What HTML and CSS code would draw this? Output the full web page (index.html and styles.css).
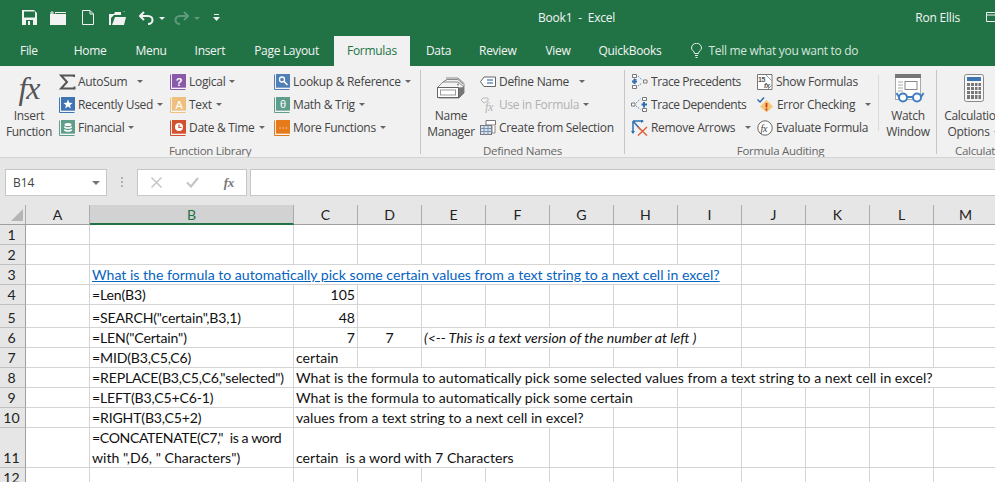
FILE: index.html
```html
<!DOCTYPE html>
<html lang="en">
<head>
<meta charset="utf-8">
<title>Book1 - Excel</title>
<link rel="stylesheet" href="styles.css">
</head>
<body>
<svg class="defs" width="0" height="0" aria-hidden="true">
  <symbol id="book" viewBox="0 0 16 16">
    <path d="M0.5 0.5V15.5H15.5" fill="none" stroke="currentColor"/>
    <rect x="2" y="0" width="14" height="14" fill="currentColor"/>
    <path d="M2 14H16" stroke="#fff" stroke-width="0.6"/>
  </symbol>
</svg>
<header class="titlebar">
  <div class="qat">
    <svg class="qi save" width="15" height="15" viewBox="0 0 15 15"><path d="M0 0H12L15 3V15H0Z" fill="#f2f2f2"/><rect x="2" y="1.500" width="11" height="6" fill="#217346"/><rect x="4" y="10" width="7" height="5" fill="#217346"/><rect x="6" y="11" width="2" height="4" fill="#f2f2f2"/></svg>
    <svg class="qi folder" width="16" height="14" viewBox="0 0 16 14"><path d="M0 3H5V1H16V14H0Z" fill="#f2f2f2"/><path d="M2 0V4M0 2H4" stroke="#f2f2f2"/><path d="M5.5 2.5H16" stroke="#217346"/></svg>
    <svg class="qi file" width="12" height="15" viewBox="0 0 12 15"><path d="M.5.5H8L11.5 4V14.5H.5Z" fill="none" stroke="#f2f2f2"/><path d="M8 .5V4H11.5" fill="none" stroke="#f2f2f2"/></svg>
    <svg class="qi open" width="17" height="14" viewBox="0 0 17 14"><path d="M0 14V3H5L6 1H12V4H5L2 7V14Z" fill="#f2f2f2"/><path d="M3 14L6 6H16V1L13 0L16 .5V6L17 6L15 14Z" fill="#f2f2f2"/></svg>
    <svg class="qi undo" width="15" height="14" viewBox="0 0 15 14"><path d="M5 1L1 5L5 9" fill="none" stroke="#f2f2f2" stroke-width="2"/><path d="M1.5 5H9C12 5 13.5 7 13.5 9C13.5 11 12 13 9 13" fill="none" stroke="#f2f2f2" stroke-width="2"/></svg>
    <span class="qcaret"></span>
    <svg class="qi redo" width="15" height="14" viewBox="0 0 15 14"><path d="M10 1L14 5L10 9" fill="none" stroke="#5f9a7c" stroke-width="2"/><path d="M13.5 5H6C3 5 1.5 7 1.5 9C1.5 11 3 13 6 13" fill="none" stroke="#5f9a7c" stroke-width="2"/></svg>
    <span class="qcaret dim"></span>
    <svg class="qi custom" width="7" height="8" viewBox="0 0 7 8"><path d="M1 .5H6" stroke="#f2f2f2"/><path d="M0 3H7L3.5 7Z" fill="#f2f2f2"/></svg>
  </div>
  <div class="doc">Book1  -  Excel</div>
  <div class="user">Ron Ellis</div>
  <svg class="display" width="12" height="10" viewBox="0 0 12 10"><path d="M.5.5H11.5V9.5H.5ZM.5 3H11.5" fill="none" stroke="#f2f2f2"/></svg>
</header>
<nav class="tabs">
  <span class="tab t-file">File</span>
  <span class="tab t-home">Home</span>
  <span class="tab t-menu">Menu</span>
  <span class="tab t-insert">Insert</span>
  <span class="tab t-layout">Page Layout</span>
  <span class="tab active">Formulas</span>
  <span class="tab t-data">Data</span>
  <span class="tab t-review">Review</span>
  <span class="tab t-view">View</span>
  <span class="tab t-qb">QuickBooks</span>
  <svg class="bulb" width="11" height="15" viewBox="0 0 11 15"><path d="M3.5 10.5C3.5 8 .5 7.500 .5 5A5 4.700 0 0 1 10.500 5C10.500 7.500 7.500 8 7.500 10.500Z" fill="none" stroke="#e6f0ea"/><path d="M4 12.500H7M4.500 14.500H6.500" stroke="#e6f0ea"/></svg>
  <span class="tell">Tell me what you want to do</span>
</nav>
<section class="ribbon">
  <div class="group g-lib">
    <div class="gbody">
      <div class="big b-insert">
        <span class="fx-big">fx</span>
        <span class="biglabel">Insert<br>Function</span>
      </div>
      <div class="col c-a">
        <div class="cmd">
          <svg class="ic" width="17" height="16" viewBox="0 0 17 16"><path d="M15 3V1.500H2L8 8L2 14.500H15.500V12.500" fill="none" stroke="#555" stroke-width="2"/></svg>
          <span>AutoSum</span><i class="caret wide"></i>
        </div>
        <div class="cmd"><svg class="ic blue" width="16" height="16"><use href="#book"/><path d="M9 2.500L10.300 5.800L13.500 6L11 8.200L11.900 11.500L9 9.600L6.100 11.500L7 8.200L4.500 6L7.700 5.800Z" fill="#fff"/></svg><span>Recently Used</span><i class="caret"></i></div>
        <div class="cmd"><svg class="ic green" width="16" height="16"><use href="#book"/><ellipse cx="9" cy="4.500" rx="3.500" ry="1.500" fill="#fff"/><path d="M5.500 6.500C6 8.500 12 8.500 12.500 6.500M5.500 9.500C6 11.500 12 11.500 12.500 9.500" fill="none" stroke="#fff" stroke-width="1.400"/></svg><span>Financial</span><i class="caret"></i></div>
      </div>
      <div class="col c-b">
        <div class="cmd"><svg class="ic purple" width="16" height="16"><use href="#book"/><text x="9" y="11.500" class="gl">?</text></svg><span>Logical</span><i class="caret"></i></div>
        <div class="cmd"><svg class="ic sand" width="16" height="16"><use href="#book"/><text x="9" y="11.500" class="gl thin">A</text></svg><span>Text</span><i class="caret"></i></div>
        <div class="cmd"><svg class="ic red" width="16" height="16"><use href="#book"/><circle cx="9" cy="7" r="4" fill="#fff"/><path d="M9 4.500V7.500H11.500" fill="none" stroke="#d2512f" stroke-width="1.200"/></svg><span>Date &amp; Time</span><i class="caret"></i></div>
      </div>
      <div class="col">
        <div class="cmd"><svg class="ic steel" width="16" height="16"><use href="#book"/><circle cx="8" cy="5.500" r="2.500" fill="none" stroke="#fff" stroke-width="1.300"/><path d="M10 7.500L13.500 11" stroke="#fff" stroke-width="1.600"/></svg><span>Lookup &amp; Reference</span><i class="caret"></i></div>
        <div class="cmd"><svg class="ic green" width="16" height="16"><use href="#book"/><text x="9" y="11" class="gl thin">θ</text></svg><span>Math &amp; Trig</span><i class="caret"></i></div>
        <div class="cmd"><svg class="ic orange" width="16" height="16"><use href="#book"/><path d="M5.500 8H6.500M8.500 8H9.500M11.500 8H12.500" stroke="#fff"/></svg><span>More Functions</span><i class="caret"></i></div>
      </div>
    </div>
    <div class="glabel">Function Library</div>
  </div>
  <div class="sep"></div>
  <div class="group g-names">
    <div class="gbody">
      <div class="big b-name">
        <svg class="bigic" width="28" height="22" viewBox="0 0 28 22"><path d="M1 10L6 5H21L27 10V16L22 21H2Z" fill="#f4f4f4" stroke="#888"/><path d="M6 5L10 2.500H21L26 7M9 1H21L27 6.500V10" fill="none" stroke="#888"/><path d="M22 10.500L27 10V16L22 21Z" fill="#777"/><rect x=".5" y="10.500" width="21" height="10" fill="#fff" stroke="#666"/><rect x="3.500" y="13" width="15" height="5" fill="#fff" stroke="#999"/><circle cx="21" cy="7.500" r="1" fill="#888"/></svg>
        <span class="biglabel">Name<br>Manager</span>
      </div>
      <div class="col">
        <div class="cmd"><svg class="ic" width="17" height="14" viewBox="0 0 17 14"><path d="M4 2H15.500V11.500H4L.5 6.700Z" fill="#fff" stroke="#666"/><path d="M7 5H13" stroke="#3f74b3" stroke-width="1.200"/><path d="M7 8H13" stroke="#3f74b3" stroke-width="1.200"/></svg><span>Define Name</span><i class="caret wide"></i></div>
        <div class="cmd off"><svg class="ic" width="17" height="16" viewBox="0 0 17 16"><path d="M3 1H8V4L4 6L1 3Z" fill="none" stroke="#bbb"/><text x="5" y="14" class="fxs">fx</text></svg><span>Use in Formula</span><i class="caret"></i></div>
        <div class="cmd"><svg class="ic" width="16" height="15" viewBox="0 0 16 15"><path d="M6 .5H15.500V5H6Z" fill="#fff" stroke="#777"/><rect x=".5" y="5.500" width="11" height="9" fill="#d9e3ef" stroke="#777"/><path d="M.5 8.500H11.500M4 5.500V14.500M8 5.500V14.500M.5 11.500H11.500" stroke="#7b93b2"/><path d="M12 5V13H15V6" fill="#fff" stroke="#888"/></svg><span>Create from Selection</span></div>
      </div>
    </div>
    <div class="glabel">Defined Names</div>
  </div>
  <div class="sep"></div>
  <div class="group g-audit">
    <div class="gbody">
      <div class="col c-t">
        <div class="cmd"><svg class="ic" width="17" height="16" viewBox="0 0 17 16"><path d="M1.500.500H5.500V3.500H1.500ZM1.500 11.500H5.500V14.500H1.500ZM12.500 6H16V9H12.500Z" fill="#fff" stroke="#777"/><path d="M3.500 4.500V5.500M3.500 5.500H5.500" fill="none" stroke="#3f74b3"/><path d="M3.500 5V10M1 7.500H6" stroke="#2f6db0" stroke-width="2"/><path d="M7 2L11 6M7 12L11 9" stroke="#5b93c9" stroke-dasharray="1.500 1"/></svg><span class="tight">Trace Precedents</span></div>
        <div class="cmd"><svg class="ic" width="17" height="16" viewBox="0 0 17 16"><path d="M11.500.500H15.500V3.500H11.500ZM11.500 11.500H15.500V14.500H11.500ZM.500 6H4V9H.500Z" fill="#fff" stroke="#777"/><path d="M13 5V10.500M10.500 7.500H16" stroke="#2f6db0" stroke-width="2"/><path d="M5 6L9.500 2M5 9L9.500 12.500" stroke="#5b93c9" stroke-dasharray="1.500 1"/></svg><span class="tight">Trace Dependents</span></div>
        <div class="cmd"><svg class="ic" width="17" height="16" viewBox="0 0 17 16"><path d="M2 1V13M2 1L12 1M2 1L9 9" stroke="#2f6db0" stroke-width="1.500" fill="none"/><path d="M0 11L2 14L4 11M10 0L13 1L10 3" fill="#2f6db0"/><path d="M7 7L16 15.500M16 7L7 15.500" stroke="#e2613a" stroke-width="1.500"/></svg><span>Remove Arrows</span><i class="caret wide"></i></div>
      </div>
      <div class="col c-s">
        <div class="cmd"><svg class="ic" width="16" height="16" viewBox="0 0 16 16"><path d="M.500.500H15V15.500H.500Z" fill="#fff" stroke="#777"/><path d="M9 1L15 7M11 15L15 11" stroke="#999"/><text x="1" y="7.500" class="mini">15</text><text x="7" y="14" class="mini it">fx</text></svg><span>Show Formulas</span></div>
        <div class="cmd"><svg class="ic" width="17" height="16" viewBox="0 0 17 16"><path d="M9.500 3L16 9.500L9.500 15.500L3 9.500Z" fill="#f3c678"/><path d="M9.500 6V10.500" stroke="#cf3a1e" stroke-width="1.800"/><path d="M9.500 11.500V13.500" stroke="#cf3a1e" stroke-width="1.800"/><path d="M0.500 2.500L3 5L7 0.500" fill="none" stroke="#2f6db0" stroke-width="1.500"/></svg><span>Error Checking</span><i class="caret wide"></i></div>
        <div class="cmd"><svg class="ic" width="16" height="16" viewBox="0 0 16 16"><circle cx="8" cy="8" r="7.200" fill="#fff" stroke="#666"/><text x="3.500" y="11.500" class="fxe">fx</text></svg><span>Evaluate Formula</span></div>
      </div>
      <div class="sep short"></div>
      <div class="big b-watch">
        <svg class="bigic" width="30" height="29" viewBox="0 0 30 29"><rect x=".5" y=".5" width="25" height="25" fill="#fff" stroke="#aaa"/><rect x="0" y="0" width="26" height="4" fill="#777"/><rect x="10" y="7.500" width="12" height="8" fill="#fff" stroke="#888"/><path d="M3 8H8M3 11H8M3 14H8M3 17H8" stroke="#aaa"/><circle cx="8" cy="23.500" r="4" fill="#fff" stroke="#3f7fc1" stroke-width="2"/><circle cx="22" cy="23.500" r="4" fill="#fff" stroke="#3f7fc1" stroke-width="2"/><path d="M12 23H18M4 23L1.500 19M26 23L28.500 19" stroke="#3f7fc1" stroke-width="2" fill="none"/></svg>
        <span class="biglabel">Watch<br>Window</span>
      </div>
    </div>
    <div class="glabel">Formula Auditing</div>
  </div>
  <div class="sep"></div>
  <div class="group g-calc">
    <div class="gbody">
      <div class="big b-calc">
        <svg class="bigic" width="20" height="28" viewBox="0 0 20 28"><rect x=".5" y=".5" width="19" height="27" rx="2" fill="#f6f6f6" stroke="#888"/><rect x="3" y="3" width="14" height="4" fill="#3f74b3"/><path d="M3 9H17V25H3Z" fill="#777"/><path d="M3 12.500H17M3 16.500H17M3 20.500H17M6.500 9V25M10.500 9V25M14 9V25" stroke="#f6f6f6"/></svg>
        <span class="biglabel">Calculation<br>Options<i class="caret"></i></span>
      </div>
    </div>
    <div class="glabel">Calculation</div>
  </div>
</section>
<section class="fbar">
  <div class="namebox"><span>B14</span><i class="caret dark"></i></div>
  <div class="grip"></div>
  <div class="fbtns">
    <svg width="11" height="11" viewBox="0 0 11 11"><path d="M.5.500L10.500 10.500M10.500.500L.5 10.500" stroke="#c6c6c6" stroke-width="1.500"/></svg>
    <svg width="13" height="11" viewBox="0 0 13 11"><path d="M1 5.500L5 9.500L12 1" fill="none" stroke="#c6c6c6" stroke-width="2.200"/></svg>
    <span class="fxbtn">fx</span>
  </div>
  <div class="finput"></div>
</section>
<main class="sheet">
  <div class="ch corner"><svg width="13" height="13" viewBox="0 0 13 13"><path d="M12 0V12H0Z" fill="#b5b5b5"/></svg></div>
  <div class="ch">A</div><div class="ch sel">B</div><div class="ch">C</div><div class="ch">D</div><div class="ch">E</div><div class="ch">F</div><div class="ch">G</div><div class="ch">H</div><div class="ch">I</div><div class="ch">J</div><div class="ch">K</div><div class="ch">L</div><div class="ch">M</div>

  <div class="rh">1</div><div class="c"></div><div class="c"></div><div class="c"></div><div class="c"></div><div class="c"></div><div class="c"></div><div class="c"></div><div class="c"></div><div class="c"></div><div class="c"></div><div class="c"></div><div class="c"></div><div class="c"></div>

  <div class="rh">2</div><div class="c"></div><div class="c"></div><div class="c"></div><div class="c"></div><div class="c"></div><div class="c"></div><div class="c"></div><div class="c"></div><div class="c"></div><div class="c"></div><div class="c"></div><div class="c"></div><div class="c"></div>

  <div class="rh">3</div><div class="c"></div><div class="c s8"><a class="link">What is the formula to automatically pick some certain values from a text string to a next cell in excel?</a></div><div class="c"></div><div class="c"></div><div class="c"></div><div class="c"></div>

  <div class="rh">4</div><div class="c"></div><div class="c f">=Len(B3)</div><div class="c num">105</div><div class="c"></div><div class="c"></div><div class="c"></div><div class="c"></div><div class="c"></div><div class="c"></div><div class="c"></div><div class="c"></div><div class="c"></div><div class="c"></div>

  <div class="rh">5</div><div class="c"></div><div class="c f">=SEARCH("certain",B3,1)</div><div class="c num">48</div><div class="c"></div><div class="c"></div><div class="c"></div><div class="c"></div><div class="c"></div><div class="c"></div><div class="c"></div><div class="c"></div><div class="c"></div><div class="c"></div>

  <div class="rh">6</div><div class="c"></div><div class="c f">=LEN("Certain")</div><div class="c num">7</div><div class="c mid">7</div><div class="c s5 note">(&lt;-- This is a text version of the number at left )</div><div class="c"></div><div class="c"></div><div class="c"></div><div class="c"></div>

  <div class="rh">7</div><div class="c"></div><div class="c f">=MID(B3,C5,C6)</div><div class="c">certain</div><div class="c"></div><div class="c"></div><div class="c"></div><div class="c"></div><div class="c"></div><div class="c"></div><div class="c"></div><div class="c"></div><div class="c"></div><div class="c"></div>

  <div class="rh">8</div><div class="c"></div><div class="c f">=REPLACE(B3,C5,C6,"selected")</div><div class="c s11">What is the formula to automatically pick some selected values from a text string to a next cell in excel?</div>

  <div class="rh">9</div><div class="c"></div><div class="c f">=LEFT(B3,C5+C6-1)</div><div class="c s6">What is the formula to automatically pick some certain</div><div class="c"></div><div class="c"></div><div class="c"></div><div class="c"></div><div class="c"></div>

  <div class="rh">10</div><div class="c"></div><div class="c f">=RIGHT(B3,C5+2)</div><div class="c s5">values from a text string to a next cell in excel?</div><div class="c"></div><div class="c"></div><div class="c"></div><div class="c"></div><div class="c"></div><div class="c"></div>

  <div class="rh">11</div><div class="c"></div><div class="c wrapped"><span class="caps">=CONCATENATE(C7,"  is a word</span><br>with ",D6, " Characters")</div><div class="c s4">certain  is a word with 7 Characters</div><div class="c"></div><div class="c"></div><div class="c"></div><div class="c"></div><div class="c"></div><div class="c"></div><div class="c"></div>

  <div class="rh">12</div><div class="c"></div><div class="c"></div><div class="c"></div><div class="c"></div><div class="c"></div><div class="c"></div><div class="c"></div><div class="c"></div><div class="c"></div><div class="c"></div><div class="c"></div><div class="c"></div><div class="c"></div>
</main>
</body>
</html>
```
FILE: styles.css
```css
* { box-sizing: border-box; }
html, body { margin: 0; padding: 0; }
body {
  width: 995px;
  height: 482px;
  overflow: hidden;
  background: #fff;
  font-family: "Open Sans", "Liberation Sans", sans-serif;
  font-size: 12px;
  letter-spacing: -0.3px;
  color: #444;
}
.defs { position: absolute; }

/* title bar */
.titlebar {
  height: 34px;
  background: #217346;
  color: #f4f4f4;
  display: flex;
  align-items: center;
}
.qat {
  width: 538px;
  height: 34px;
  flex: none;
  display: flex;
  align-items: center;
  padding-left: 22px;
}
.qi { flex: none; margin-top: 1px; }
.folder { margin-left: 13px; }
.file { margin-left: 16px; }
.open { margin-left: 15px; }
.undo { margin-left: 13px; }
.redo { margin-left: 9px; }
.custom { margin-left: 13px; }
.qcaret {
  width: 0;
  height: 0;
  margin: 2px 0 0 5px;
  border: 3px solid transparent;
  border-top: 3px solid #f2f2f2;
  border-bottom: 0;
}
.qcaret.dim { border-top-color: #5f9a7c; }
.doc { white-space: pre; letter-spacing: -0.2px; }
.user { margin-left: auto; letter-spacing: -0.2px; }
.display { margin: 0 -3px 0 26px; flex: none; }

/* tabs */
.tabs {
  height: 32px;
  background: #217346;
  color: #f4f4f4;
  display: flex;
  align-items: flex-end;
  line-height: 30px;
}
.tab { height: 30px; flex: none; }
.t-file { margin-left: 20px; }
.t-home { margin-left: 36px; }
.t-menu { margin-left: 29px; }
.t-insert { margin-left: 28px; }
.t-layout { margin-left: 29px; }
.active {
  width: 76px;
  margin-left: 15px;
  background: #f1f1f1;
  color: #217346;
  text-align: center;
}
.t-data { margin-left: 16px; }
.t-review { margin-left: 28px; }
.t-view { margin-left: 29px; }
.t-qb { margin-left: 28px; }
.bulb { margin: 0 6px 8px 30px; flex: none; }
.tell { height: 30px; color: #d7e6dd; }

/* ribbon */
.ribbon {
  height: 92px;
  background: #f1f1f1;
  border-bottom: 1px solid #d4d4d4;
  display: flex;
  overflow: hidden;
}
.group { flex: none; display: flex; flex-direction: column; }
.g-lib { width: 420px; }
.g-names { width: 203px; }
.g-audit { width: 311px; }
.g-calc { width: 73px; }
.gbody { height: 77px; flex: none; display: flex; padding-top: 4px; }
.glabel {
  height: 15px;
  text-align: center;
  font-size: 11.500px;
  line-height: 15px;
  color: #666;
}
.g-calc .glabel { padding-left: 18px; text-align: left; white-space: nowrap; }
.sep { width: 1px; flex: none; height: 84px; margin-top: 4px; background: #c6c6c6; }
.sep.short { height: 56px; margin: 5px 0 0 0; background: #dadada; }
.big {
  flex: none;
  display: flex;
  flex-direction: column;
  align-items: center;
  white-space: nowrap;
}
.biglabel { line-height: 16px; text-align: center; display: block; }
.bigic { flex: none; }
.b-insert { width: 50px; margin-left: 4px; margin-right: 5px; }
.fx-big {
  height: 38px;
  font-family: "Liberation Serif", serif;
  font-style: italic;
  font-size: 32px;
  letter-spacing: -1px;
  line-height: 36px;
  color: #555;
}
.b-name { width: 58px; margin-left: 1px; }
.b-name .bigic { margin: 7px 0 9px; }
.b-watch { width: 58px; }
.b-watch .bigic { margin: 4px 0 5px 3px; }
.b-calc { width: 73px; }
.b-calc .bigic { margin: 4px 0 6px; }
.col { flex: none; display: flex; flex-direction: column; }
.c-a { width: 111px; }
.c-b { width: 104px; }
.g-audit .gbody { padding-left: 6px; }
.c-t { width: 126px; }
.c-s { width: 121px; }
.cmd {
  height: 23px;
  display: flex;
  align-items: center;
  white-space: nowrap;
  line-height: 23px;
}
.tight { letter-spacing: -0.42px; }
.ic { flex: none; margin-right: 3px; }
.ic[width="17"] { margin-right: 2px; }
.g-audit .ic[width="17"] { margin-right: 3px; }
.off { color: #b1b1b1; }
.caret {
  display: inline-block;
  width: 0;
  height: 0;
  margin-left: 4px;
  border: 3px solid transparent;
  border-top: 3px solid #666;
  border-bottom: 0;
  vertical-align: middle;
}
.caret.wide { margin-left: 10px; }
.caret.dark { margin-left: auto; border-width: 4px; border-top-color: #777; border-bottom: 0; }
.blue { color: #3f74b3; }
.steel { color: #4f7fb4; }
.green { color: #5f9e8a; }
.purple { color: #8a5aa8; }
.sand { color: #eec07f; }
.red { color: #d2512f; }
.orange { color: #e47a1a; }
.gl {
  font-family: "Liberation Sans", sans-serif;
  font-size: 11px;
  font-weight: bold;
  fill: #fff;
  text-anchor: middle;
}
.gl.thin { font-weight: normal; }
.fxs, .fxe {
  font-family: "Liberation Serif", serif;
  font-style: italic;
  font-size: 12px;
}
.fxs { fill: #b1b1b1; }
.fxe { fill: #444; font-size: 10px; }
.mini { font-family: "Liberation Sans", sans-serif; font-size: 7px; font-weight: bold; fill: #555; }
.mini.it { font-style: italic; }

/* formula bar */
.fbar {
  height: 47px;
  background: #e6e6e6;
  display: flex;
  padding: 11px 0 9px 5px;
  align-items: stretch;
}
.namebox {
  width: 102px;
  flex: none;
  background: #fff;
  border: 1px solid #c6c6c6;
  display: flex;
  align-items: center;
  padding: 0 6px 0 7px;
  letter-spacing: 0;
  color: #444;
}
.grip {
  width: 2px;
  height: 11px;
  flex: none;
  align-self: center;
  margin: 0 14px;
  background: repeating-linear-gradient(#b0b0b0 0 2px, transparent 2px 4px);
}
.fbtns {
  width: 110px;
  flex: none;
  background: #fff;
  border: 1px solid #c6c6c6;
  display: flex;
  align-items: center;
  justify-content: space-between;
  padding: 0 12px 0 13px;
}
.fxbtn {
  font-family: "Liberation Serif", serif;
  font-style: italic;
  font-weight: bold;
  font-size: 13px;
  color: #777;
}
.finput {
  flex: 1;
  margin-left: 3px;
  background: #fff;
  border: 1px solid #c6c6c6;
  border-right: 0;
}

/* sheet */
.sheet {
  display: grid;
  grid-template-columns: 26px 64px 204px repeat(11, 64px);
  grid-template-rows: repeat(5, 20px) 23px repeat(5, 20px) 40px 20px;
  font-family: Lato, "Liberation Sans", sans-serif;
  font-size: 14.100px;
  letter-spacing: 0;
  line-height: 20px;
  color: #111;
}
.ch {
  background: #e6e6e6;
  border-right: 1px solid #ababab;
  border-bottom: 1px solid #9f9f9f;
  text-align: center;
  color: #222;
}
.corner { padding: 4px 0 0 9px; line-height: 0; }
.sel {
  background: #d2d2d2;
  border-bottom: 2px solid #217346;
  color: #217346;
}
.rh {
  background: #e6e6e6;
  border-right: 1px solid #9f9f9f;
  border-bottom: 1px solid #c0c0c0;
  display: flex;
  align-items: flex-end;
  justify-content: center;
  color: #222;
  padding-right: 2px;
  line-height: 18px;
}
.c {
  min-width: 0;
  border-right: 1px solid #d4d4d4;
  border-bottom: 1px solid #d4d4d4;
  padding: 0 2px;
  white-space: pre;
  align-self: stretch;
  display: flex;
  align-items: flex-end;
  line-height: 18px;
}
.f { letter-spacing: -0.17px; }
.wrapped { display: block; line-height: 20px; }
.caps { letter-spacing: -0.38px; }
.num { justify-content: flex-end; }
.mid { justify-content: center; }
.note { font-style: italic; }
.link { color: #0563c1; text-decoration: underline; }
.s4 { grid-column: span 4; }
.s5 { grid-column: span 5; }
.s6 { grid-column: span 6; }
.s8 { grid-column: span 8; }
.s11 { grid-column: span 11; }
```
